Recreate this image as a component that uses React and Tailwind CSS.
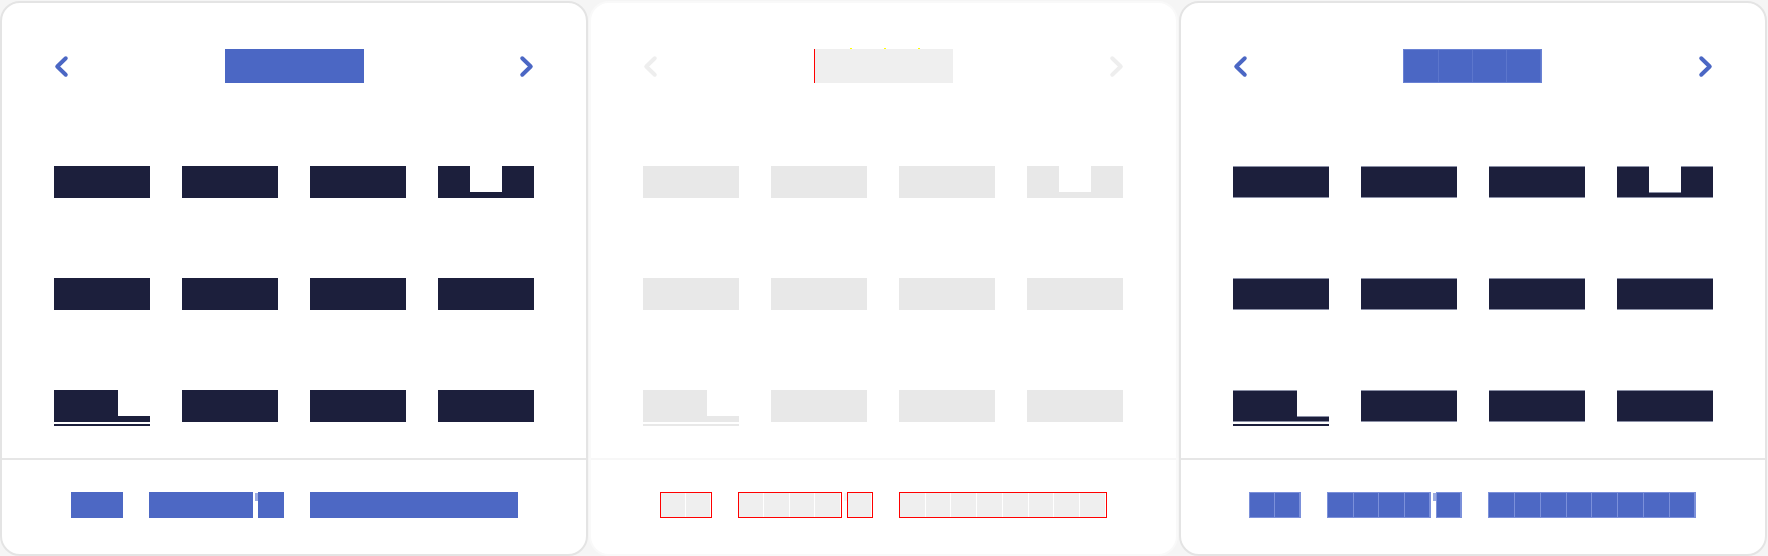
import React from "react";

const MONTHS = ["Jan", "Feb", "Mar", "Apr", "May", "Jun", "Jul", "Aug", "Sep", "Oct", "Nov", "Dec"];

const V = {
  normal: {
    panel: "border-[#e4e4e4]",
    chevron: "#4b67c4",
    title: "bg-[#4b67c4]",
    titleSeg: "",
    month: "bg-[#1c1f3c]",
    under: "bg-[#1c1f3c]",
    divider: "bg-[#e6e6e6]",
    foot: "bg-[#4d68c4]",
    footSeg: "",
    apos: "bg-[#9aaae0]",
  },
  ghost: {
    panel: "border-[#f9f9f9]",
    chevron: "#eeeeee",
    title: "bg-[#efefef] border-l border-[#ff0000]",
    titleSeg: "",
    month: "bg-[#e8e8e8]",
    under: "bg-[#e8e8e8]",
    divider: "bg-[#f7f7f7]",
    foot: "bg-[#efefef] border border-[#ff0000]",
    footSeg: "border-r border-white last:border-r-0",
    apos: "bg-[#f6f6f6]",
  },
  outlined: {
    panel: "border-[#e4e4e4]",
    chevron: "#4b67c4",
    title: "bg-[#4b67c4] border border-[#6a82d4]",
    titleSeg: "border-r border-[#5c76cc] last:border-r-0",
    month: "bg-[#1c1f3c] border-y border-[#8a8fa6]",
    under: "bg-[#1c1f3c]",
    divider: "bg-[#e6e6e6]",
    foot: "bg-[#4d68c4] border border-[#7b90da]",
    footSeg: "border-r border-[#7b90da] last:border-r-0",
    apos: "bg-[#9aaae0]",
  },
};

function Chevron({ dir, color }) {
  const pts = dir === "left" ? "10.75,2.25 2.25,10.5 10.75,18.75" : "2.25,2.25 10.75,10.5 2.25,18.75";
  return (
    <svg viewBox="0 0 13 21" fill="none" className="h-[21px] w-[13px] shrink-0 overflow-visible">
      <polyline points={pts} stroke={color} strokeWidth="4" strokeLinecap="round" strokeLinejoin="round" />
    </svg>
  );
}

function Hidden({ children, size }) {
  return (
    <span
      className={`pointer-events-none absolute inset-0 flex select-none items-center justify-center overflow-hidden whitespace-nowrap text-transparent ${size}`}
      style={{ fontFamily: '"Liberation Sans", Arial, sans-serif' }}
    >
      {children}
    </span>
  );
}

function MonthBlock({ name, s }) {
  let segs;
  if (name === "Apr") {
    segs = (
      <div className="flex h-[32px] items-end">
        <div className={`h-[32px] w-[32px] ${s.month}`} />
        <div className={`h-[6px] w-[32px] ${s.month}`} />
        <div className={`h-[32px] w-[32px] ${s.month}`} />
      </div>
    );
  } else if (name === "Sep") {
    segs = (
      <div className="flex flex-col">
        <div className="flex h-[32px] items-end">
          <div className={`h-[32px] w-[64px] ${s.month}`} />
          <div className={`h-[6px] w-[32px] ${s.month}`} />
        </div>
        <div className={`mt-[2px] h-[2px] w-[96px] ${s.under}`} />
      </div>
    );
  } else {
    segs = <div className={`h-[32px] w-[96px] ${s.month}`} />;
  }
  return (
    <div className="relative h-[32px] w-[96px]">
      {segs}
      <Hidden size="text-[22px]">{name}</Hidden>
    </div>
  );
}

function FootGroup({ w, n, label, s }) {
  return (
    <div className={`relative box-border flex h-[26px] shrink-0 ${s.foot}`} style={{ width: w }}>
      {Array.from({ length: n }).map((_, i) => (
        <div key={i} className={`h-full flex-1 ${s.footSeg}`} />
      ))}
      <Hidden size="text-[18px]">{label}</Hidden>
    </div>
  );
}

function Panel({ v }) {
  const s = V[v];
  return (
    <div className={`mr-[1px] mt-[1px] box-border h-[555px] overflow-hidden rounded-[20px] border-2 bg-white ${s.panel}`}>
      <div className="pt-[46px]">
        <div className="flex h-[34px] items-center justify-between px-[53px]">
          <Chevron dir="left" color={s.chevron} />
          <div className={`relative box-border flex h-[34px] w-[139px] ${s.title}`}>
            {[0, 1, 2, 3].map((i) => (
              <div key={i} className={`h-full flex-1 ${s.titleSeg}`} />
            ))}
            {v === "ghost" && (
              <>
                <span className="absolute -top-[1px] left-[35px] h-[1px] w-[2px] bg-[#ffff00]" />
                <span className="absolute -top-[1px] left-[69px] h-[1px] w-[2px] bg-[#ffff00]" />
                <span className="absolute -top-[1px] left-[103px] h-[1px] w-[2px] bg-[#ffff00]" />
              </>
            )}
            <Hidden size="text-[26px]">2024</Hidden>
          </div>
          <Chevron dir="right" color={s.chevron} />
        </div>

        <div className="mx-auto mt-[83px] grid w-[512px] grid-cols-4 gap-y-[80px]">
          {MONTHS.map((m) => (
            <div key={m} className="flex h-[32px] justify-center">
              <MonthBlock name={m} s={s} />
            </div>
          ))}
        </div>
      </div>

      <div className={`mt-[36px] h-[2px] w-full ${s.divider}`} />

      <div className="flex justify-center pt-[32px]">
        <div className="flex items-start">
          <FootGroup w={52} n={2} label="Go" s={s} />
          <div className="w-[26px] shrink-0" />
          <FootGroup w={104} n={4} label="Year" s={s} />
          <div className={`ml-[2px] mt-[1px] h-[8px] w-[3px] shrink-0 ${s.apos}`} />
          <FootGroup w={26} n={1} label="'s" s={s} />
          <div className="w-[26px] shrink-0" />
          <FootGroup w={208} n={8} label="Calendar" s={s} />
        </div>
      </div>
    </div>
  );
}

export default function App() {
  return (
    <div className="grid h-[556px] w-[1768px] grid-cols-3 items-start overflow-hidden bg-[#f5f5f5]">
      <Panel v="normal" />
      <Panel v="ghost" />
      <Panel v="outlined" />
    </div>
  );
}
